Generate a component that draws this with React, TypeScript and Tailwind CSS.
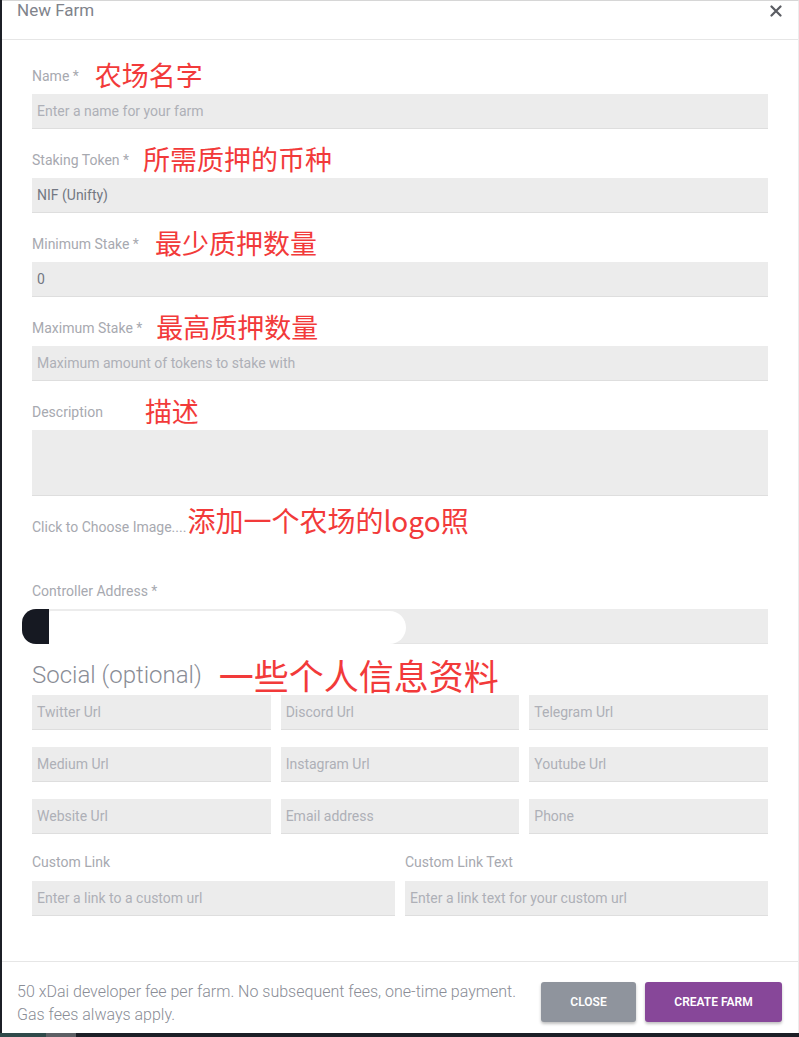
import React from "react";

const cjk = "font-['Noto_Sans_CJK_SC','Microsoft_YaHei',sans-serif] text-[#f23a3a] font-normal whitespace-nowrap";

function Label({ text, note, noteClass }: { text: string; note?: string; noteClass?: string }) {
  return (
    <div className="h-[18px] mb-[9px] flex items-center text-[14px] leading-[18px] text-[#a7a9b0] whitespace-nowrap">
      <span>{text}</span>
      {note && <span className={`${cjk} ${noteClass ?? ""}`}>{note}</span>}
    </div>
  );
}

function Input({ placeholder, value, className }: { placeholder?: string; value?: string; className?: string }) {
  return (
    <div
      className={`h-[35px] bg-[#ececec] border-b border-[#dedede] flex items-center pl-[5px] text-[14px] whitespace-nowrap overflow-hidden ${className ?? ""}`}
    >
      {value ? <span className="text-[#737883]">{value}</span> : <span className="text-[#aeb0b7]">{placeholder}</span>}
    </div>
  );
}

export default function App() {
  return (
    <div className="w-[799px] h-[1037px] bg-[#1c1f26] flex flex-col overflow-hidden font-['Roboto',sans-serif]">
      <div className="flex-1 ml-[2px] bg-white border-t border-[#d6d6d6] border-r border-r-[#ececec] flex flex-col">
        {/* header */}
        <div className="h-[39px] border-b border-[#e6e6e6] flex items-start justify-between pl-[15px] pr-[15px] shrink-0">
          <div className="text-[17px] leading-[19px] text-[#80838b]">New Farm</div>
          <svg width="12" height="12" viewBox="0 0 12 12" className="mt-[4px] mr-[1px]">
            <path d="M1.5 1.5 L10.5 10.5 M10.5 1.5 L1.5 10.5" stroke="#5a5c62" strokeWidth="2.2" strokeLinecap="round" />
          </svg>
        </div>

        {/* body */}
        <div className="flex-1 pl-[30px] pr-[30px] pt-[27px]">
          <div className="mb-[22px]">
            <Label text="Name *" note="农场名字" noteClass="ml-[16px] text-[27px] mb-[3px]" />
            <Input placeholder="Enter a name for your farm" />
          </div>
          <div className="mb-[22px]">
            <Label text="Staking Token *" note="所需质押的币种" noteClass="ml-[14px] text-[27px] mb-[3px]" />
            <Input value="NIF (Unifty)" />
          </div>
          <div className="mb-[22px]">
            <Label text="Minimum Stake *" note="最少质押数量" noteClass="ml-[16px] text-[27px] mb-[3px]" />
            <Input value="0" />
          </div>
          <div className="mb-[22px]">
            <Label text="Maximum Stake *" note="最高质押数量" noteClass="ml-[14px] text-[27px] mb-[3px]" />
            <Input placeholder="Maximum amount of tokens to stake with" />
          </div>
          <div className="mb-[22px]">
            <Label text="Description" note="描述" noteClass="ml-[42px] text-[27px] mb-[3px]" />
            <div className="h-[66px] bg-[#ececec] border-b border-[#dedede]" />
          </div>
          <div className="h-[18px] mb-[46px] flex items-center text-[14px] text-[#a7a9b0] whitespace-nowrap">
            <span>Click to Choose Image....</span>
            <span className={`${cjk} text-[28px] mb-[15px] ml-[1px]`}>添加一个农场的logo照</span>
          </div>
          <div>
            <Label text="Controller Address *" />
            <div className="relative h-[35px] bg-[#ececec] border-b border-[#e4e4e4]">
              <div className="absolute left-[-10px] top-0 w-[27px] h-[35px] bg-[#161922] rounded-l-[14px]" />
              <div className="absolute left-[17px] top-[2px] w-[357px] h-[33px] bg-white rounded-r-[17px] rounded-tl-[2px]" />
            </div>
          </div>
          <div className="mt-[17px] mb-[6px] h-[28px] flex items-center whitespace-nowrap">
            <span className="text-[24px] font-light text-[#8a8d96] leading-[28px]">Social (optional)</span>
            <span className={`${cjk} text-[35px] ml-[17px]`}>一些个人信息资料</span>
          </div>
          <div className="grid grid-cols-3 gap-x-[10px] gap-y-[17px]">
            <Input placeholder="Twitter Url" />
            <Input placeholder="Discord Url" />
            <Input placeholder="Telegram Url" />
            <Input placeholder="Medium Url" />
            <Input placeholder="Instagram Url" />
            <Input placeholder="Youtube Url" />
            <Input placeholder="Website Url" />
            <Input placeholder="Email address" />
            <Input placeholder="Phone" />
          </div>
          <div className="mt-[19px] grid grid-cols-2 gap-x-[10px]">
            <div>
              <div className="h-[18px] mb-[10px] flex items-center text-[14px] text-[#a7a9b0]">Custom Link</div>
              <Input placeholder="Enter a link to a custom url" />
            </div>
            <div>
              <div className="h-[18px] mb-[10px] flex items-center text-[14px] text-[#a7a9b0]">Custom Link Text</div>
              <Input placeholder="Enter a link text for your custom url" />
            </div>
          </div>
        </div>

        {/* footer */}
        <div className="h-[72px] shrink-0 border-t border-[#e6e6e6] flex items-start justify-between pl-[15px] pr-[16px] pt-[18px]">
          <div className="text-[16px] font-light leading-[23px] text-[#8a8d96] whitespace-nowrap">
            <div>50 xDai developer fee per farm. No subsequent fees, one-time payment.</div>
            <div>Gas fees always apply.</div>
          </div>
          <div className="flex gap-[9px] mt-[2px] shrink-0">
            <button className="w-[95px] h-[40px] rounded-[3px] bg-[#8f949d] text-white text-[12px] font-semibold shadow-[0_2px_3px_rgba(0,0,0,0.25)]">
              CLOSE
            </button>
            <button className="w-[137px] h-[40px] rounded-[3px] bg-[#874799] text-white text-[12px] font-semibold shadow-[0_2px_3px_rgba(0,0,0,0.25)]">
              CREATE FARM
            </button>
          </div>
        </div>
      </div>
      <div className="h-[4px] shrink-0 flex">
        <div className="w-[46px] bg-[#2f4a4a]" />
        <div className="w-[30px] bg-[#5c5f64]" />
        <div className="flex-1 bg-[#1c1f26]" />
      </div>
    </div>
  );
}
